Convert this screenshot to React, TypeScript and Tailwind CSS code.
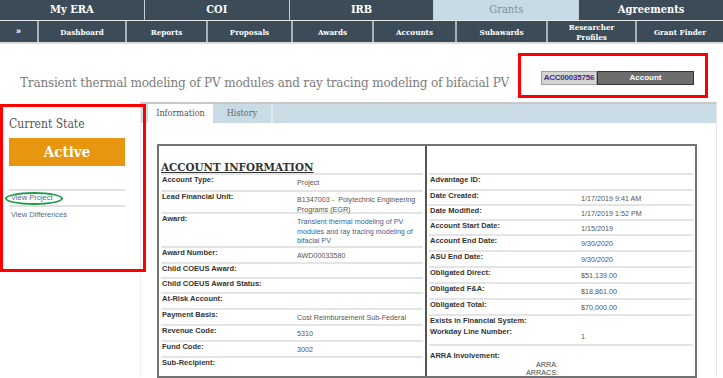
import React from "react";

const slab = "font-['DejaVu_Serif_Condensed','DejaVu_Serif',serif]";
const sans = "font-['Liberation_Sans',Arial,sans-serif]";

const topTabs = [
  { name: "My ERA", active: false },
  { name: "COI", active: false },
  { name: "IRB", active: false },
  { name: "Grants", active: true },
  { name: "Agreements", active: false },
];

const subTabs = [
  { name: "Dashboard", w: "w-[88px]" },
  { name: "Reports", w: "w-[81px]" },
  { name: "Proposals", w: "w-[85px]" },
  { name: "Awards", w: "w-[81px]" },
  { name: "Accounts", w: "w-[83px]" },
  { name: "Subawards", w: "w-[91px]" },
  { name: "Researcher\nProfiles", w: "w-[89px]" },
  { name: "Grant Finder", w: "flex-1" },
];

type Row = { label: string; value?: string; h: string; link?: boolean };

const leftRows: Row[] = [
  { label: "Account Type:", value: "Project", h: "h-[17px]" },
  { label: "Lead Financial Unit:", value: "B1347003 -  Polytechnic Engineering Programs (EGR)", h: "h-[22px]" },
  { label: "Award:", value: "Transient thermal modeling of PV modules and ray tracing modeling of bifacial PV", h: "h-[34px]", link: true },
  { label: "Award Number:", value: "AWD00033580", h: "h-[16px]" },
  { label: "Child COEUS Award:", h: "h-[15px]" },
  { label: "Child COEUS Award Status:", h: "h-[15px]" },
  { label: "At-Risk Account:", h: "h-[16px]" },
  { label: "Payment Basis:", value: "Cost Reimbursement Sub-Federal", h: "h-[16px]" },
  { label: "Revenue Code:", value: "5310", h: "h-[16px]" },
  { label: "Fund Code:", value: "3002", h: "h-[16px]" },
  { label: "Sub-Recipient:", h: "h-[20px]" },
];

const rightRows: Row[] = [
  { label: "Advantage ID:", h: "h-[16px]" },
  { label: "Date Created:", value: "1/17/2019 9:41 AM", h: "h-[15px]" },
  { label: "Date Modified:", value: "1/17/2019 1:52 PM", h: "h-[15px]" },
  { label: "Account Start Date:", value: "1/15/2019", h: "h-[15px]" },
  { label: "Account End Date:", value: "9/30/2020", h: "h-[16px]" },
  { label: "ASU End Date:", value: "9/30/2020", h: "h-[16px]" },
  { label: "Obligated Direct:", value: "$51,139.00", h: "h-[16px]" },
  { label: "Obligated F&A:", value: "$18,861.00", h: "h-[16px]" },
  { label: "Obligated Total:", value: "$70,000.00", h: "h-[16px]" },
];

function InfoRow({ row, valueCol }: { row: Row; valueCol: string }) {
  return (
    <div className={`flex border-t-2 border-[#e4e4e4] mx-[2px] ${row.h}`}>
      <div className={`${valueCol} shrink-0 pl-[1px] text-[7.5px] leading-[10px] font-bold text-[#333]`}>{row.label}</div>
      <div
        className={`flex-1 pt-[3px] text-[7.2px] leading-[9.5px] whitespace-pre-wrap ${
          row.link ? "text-[#3d5f8f]" : "text-[#555]"
        }`}
      >
        {row.value}
      </div>
    </div>
  );
}

export default function App() {
  return (
    <div className={`w-[723px] h-[378px] overflow-hidden bg-white ${sans}`}>
      {/* top navigation */}
      <div className="bg-[#e9ecee]">
        <div className="flex gap-px h-[20px] bg-[#c5ced3]">
          {topTabs.map((t) => (
            <div
              key={t.name}
              className={`flex-1 flex items-center justify-center ${slab} text-[11px] ${
                t.active ? "bg-[#c6dbe5] text-[#7f8f98]" : "bg-[#3b4b57] text-white font-bold"
              }`}
            >
              {t.name}
            </div>
          ))}
        </div>
        <div className="flex h-[23px] mt-px bg-[#3b4b57] border-b-2 border-[#dcdcdc]">
          <div className="w-[39px] flex items-center justify-center text-white text-[9px] font-bold border-r-2 border-[#a7b1b6]">»</div>
          {subTabs.map((s, i) => (
            <div
              key={s.name}
              className={`${s.w} flex items-center justify-center text-center px-1 whitespace-pre-line ${slab} text-[8px] leading-[10px] font-bold text-white ${
                i < subTabs.length - 1 ? "border-r-2 border-[#a7b1b6]" : ""
              }`}
            >
              {s.name}
            </div>
          ))}
        </div>
      </div>

      {/* page header */}
      <div className="flex items-center justify-between h-[58px] pt-[8px]">
        <h1 className={`pl-[20px] pt-[12px] ${slab} text-[13.4px] text-[#7d7d7d] tracking-[-0.2px]`}>
          Transient thermal modeling of PV modules and ray tracing modeling of bifacial PV
        </h1>
        <div className="relative mr-[29px] mt-[2px] flex">
          <div className="w-[56px] h-[14px] flex items-center justify-center bg-[#d4d4d4] border border-[#a0a0a0] text-[8px] font-bold text-[#4b2a83] tracking-[-0.2px]">
            ACC00035756
          </div>
          <div className="w-[97px] h-[14px] flex items-center justify-center bg-[#6d6d6d] border border-[#333] text-[8px] font-bold text-white">
            Account
          </div>
          <div className="absolute -left-[23px] -right-[14px] -top-[18px] -bottom-[13px] border-[3px] border-[#ff0000]" />
        </div>
      </div>

      {/* main */}
      <div className="flex">
        <div className="relative w-[140px] shrink-0 pt-[13px]">
          <div className={`pl-[9px] ${slab} text-[12px] text-[#555]`}>Current State</div>
          <div className={`mx-[9px] mt-[5px] w-[116px] h-[28px] flex items-center justify-center bg-[#e8960f] ${slab} text-[15px] font-bold text-white`}>
            Active
          </div>
          <div className="mt-[23px] mx-[9px] w-[116px] border-t-2 border-[#e0e0e0]" />
          <div className="relative pl-[11px] h-[14px] flex items-center text-[7.5px] text-[#4e6e91]">
            View Project
            <div className="absolute left-[5px] top-[1px] w-[58px] h-[13px] border-2 border-[#1a9b48] rounded-[50%]" />
          </div>
          <div className="mx-[9px] w-[116px] border-t-2 border-[#e0e0e0]" />
          <div className="pl-[11px] pt-[2px] text-[7.5px] text-[#4e6e91]">View Differences</div>
          <div className="absolute left-0 top-[2px] w-[146px] h-[168px] border-[3px] border-[#ff0000] z-10" />
        </div>

        <div className="w-[577px] shrink-0 border-t-2 border-[#c8c8c8] border-r border-r-[#e6e6e6] border-l border-l-[#f0f0f0] h-[275px]">
          <div className="flex h-[19px] bg-[#c9dce5]">
            <div className={`ml-[7px] w-[65px] bg-white flex items-center justify-center ${slab} text-[9px] text-[#555]`}>Information</div>
            <div className={`w-[60px] flex items-center justify-center border-r-2 border-[#dde8ee] ${slab} text-[9px] text-[#666]`}>History</div>
          </div>

          <div className="ml-[16px] mt-[21px] w-[540px] h-[234px] border-2 border-[#737373] flex overflow-hidden">
            <div className="w-[268px] shrink-0 border-r-2 border-[#555]">
              <div className="h-[27px] pl-[2px] pt-[8px]">
                <span className={`${slab} text-[11.5px] font-bold text-[#333] underline`}>ACCOUNT INFORMATION</span>
              </div>
              {leftRows.map((r) => (
                <InfoRow key={r.label} row={r} valueCol="w-[136px]" />
              ))}
            </div>
            <div className="flex-1">
              <div className="h-[27px]" />
              {rightRows.map((r) => (
                <InfoRow key={r.label} row={r} valueCol="w-[152px]" />
              ))}
              <div className="border-t-2 border-[#e4e4e4] mx-[2px] h-[30px] text-[7.5px] leading-[10px]">
                <div className="pl-[1px] font-bold text-[#333]">Exists in Financial System:</div>
                <div className="flex">
                  <div className="w-[152px] pl-[1px] pt-[1px] font-bold text-[#333]">Workday Line Number:</div>
                  <div className="pt-[6px] text-[7.2px] text-[#555]">1</div>
                </div>
              </div>
              <div className="border-t-2 border-[#e4e4e4] mx-[2px] h-[40px] text-[7.2px] leading-[8px]">
                <div className="pl-[1px] pt-[5px] font-bold text-[7.5px] text-[#333] leading-[10px]">ARRA Involvement:</div>
                <div className="w-[129px] text-right text-[#444]">ARRA:</div>
                <div className="w-[129px] text-right text-[#444]">ARRACS:</div>
              </div>
            </div>
          </div>
        </div>
      </div>
    </div>
  );
}
